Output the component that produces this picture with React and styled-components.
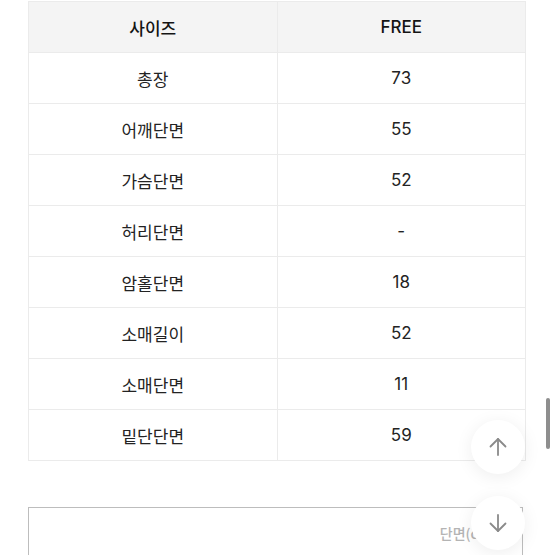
import React from 'react';
import styled, { createGlobalStyle } from 'styled-components';

const GlobalStyle = createGlobalStyle`
  html, body {
    margin: 0;
    padding: 0;
    background: #fff;
    overflow: hidden;
    font-family: Inter, "Noto Sans CJK KR", sans-serif;
  }
`;

const Page = styled.div`
  position: relative;
  width: 555px;
  height: 555px;
  overflow: hidden;
  padding: 1px 0 0 28px;
  box-sizing: border-box;
`;

const Table = styled.table`
  width: 498px;
  border-collapse: collapse;
  table-layout: fixed;
  color: #222;
`;

const Cell = styled.td`
  height: 50px;
  padding: 0;
  border: 1px solid #ebebeb;
  text-align: center;
  vertical-align: middle;
  font-size: 17px;
  font-weight: ${({ head }) => (head ? 500 : 400)};
  color: ${({ head }) => (head ? '#141414' : '#232323')};
  background: ${({ head }) => (head ? '#f4f4f4' : '#fff')};
  font-family: Inter, "Noto Sans CJK KR", sans-serif;
`;

const NoteBox = styled.div`
  margin-top: 46px;
  width: 495px;
  height: 120px;
  border: 1.5px solid #bdbdbd;
  border-bottom: none;
  box-sizing: border-box;
  display: flex;
  justify-content: flex-end;
  padding: 15px 26px 0 0;
`;

const NoteText = styled.span`
  font-size: 14px;
  font-weight: 500;
  color: #b4b4b4;
  font-family: "Noto Sans CJK KR", sans-serif;
`;

const Scrollbar = styled.div`
  position: absolute;
  left: 546px;
  top: 398px;
  width: 4px;
  height: 51px;
  border-radius: 2px;
  background: #8e8e8e;
`;

const FloatButton = styled.button`
  position: absolute;
  left: 471px;
  top: ${({ top }) => top}px;
  width: 54px;
  height: 54px;
  border-radius: 50%;
  border: none;
  padding: 0;
  background: #fff;
  box-shadow: 0 3px 18px rgba(0, 0, 0, 0.07);
  display: flex;
  align-items: center;
  justify-content: center;
`;

const Arrow = ({ down }) => (
  <svg width="22" height="22" viewBox="0 0 22 22" fill="none" stroke="#8a8a8a" strokeWidth="1.8" strokeLinecap="round" strokeLinejoin="round">
    {down ? (
      <>
        <path d="M11 3v16" />
        <path d="M3.5 11.5L11 19l7.5-7.5" />
      </>
    ) : (
      <>
        <path d="M11 19V3" />
        <path d="M3.5 10.5L11 3l7.5 7.5" />
      </>
    )}
  </svg>
);

const rows = [
  ['총장', '73'],
  ['어깨단면', '55'],
  ['가슴단면', '52'],
  ['허리단면', '-'],
  ['암홀단면', '18'],
  ['소매길이', '52'],
  ['소매단면', '11'],
  ['밑단단면', '59'],
];

export default function App() {
  return (
    <Page>
      <GlobalStyle />
      <Table>
        <tbody>
          <tr>
            <Cell head>사이즈</Cell>
            <Cell head>FREE</Cell>
          </tr>
          {rows.map(([label, value]) => (
            <tr key={label}>
              <Cell>{label}</Cell>
              <Cell>{value}</Cell>
            </tr>
          ))}
        </tbody>
      </Table>
      <NoteBox>
        <NoteText>단면(cm)</NoteText>
      </NoteBox>
      <Scrollbar />
      <FloatButton top={420}><Arrow /></FloatButton>
      <FloatButton top={496}><Arrow down /></FloatButton>
    </Page>
  );
}
